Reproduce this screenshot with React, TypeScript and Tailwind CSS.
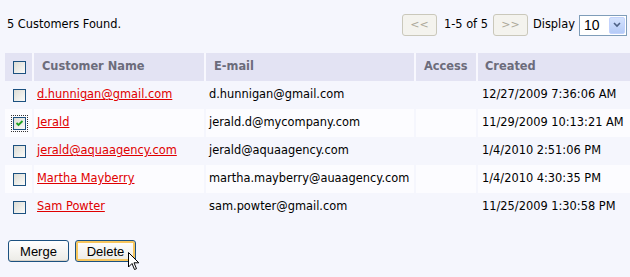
import React from "react";

type Customer = {
  name: string;
  email: string;
  access: string;
  created: string;
  checked?: boolean;
};

const customers: Customer[] = [
  { name: "d.hunnigan@gmail.com", email: "d.hunnigan@gmail.com", access: "", created: "12/27/2009 7:36:06 AM" },
  { name: "Jerald", email: "jerald.d@mycompany.com", access: "", created: "11/29/2009 10:13:21 AM", checked: true },
  { name: "jerald@aquaagency.com", email: "jerald@aquaagency.com", access: "", created: "1/4/2010 2:51:06 PM" },
  { name: "Martha Mayberry", email: "martha.mayberry@auaagency.com", access: "", created: "1/4/2010 4:30:35 PM" },
  { name: "Sam Powter", email: "sam.powter@gmail.com", access: "", created: "11/25/2009 1:30:58 PM" },
];

function Check({ checked }: { checked?: boolean }) {
  return (
    <span
      className={
        "relative block w-[13px] h-[13px] border border-[#1c5180] bg-gradient-to-br from-[#dcdcd5] to-[#fbfbf9] " +
        (checked ? "outline outline-1 outline-dotted outline-[#333] outline-offset-1" : "")
      }
    >
      {checked && (
        <svg viewBox="0 0 11 11" className="absolute inset-0 w-[11px] h-[11px]">
          <path d="M2.5 5 L4.5 7 L8.5 3" fill="none" stroke="#21a121" strokeWidth="1.8" />
        </svg>
      )}
    </span>
  );
}

function PageButton({ label }: { label: string }) {
  return (
    <span className="flex items-center justify-center w-[35px] h-[22px] rounded-[3px] border border-[#cac8bb] bg-[#f4f3ee] text-[#aca899] text-[11px]">
      {label}
    </span>
  );
}

function ActionButton({ label, hover }: { label: string; hover?: boolean }) {
  return (
    <button
      className={
        "w-[61px] h-[22px] rounded-[3px] border border-[#1c5180] bg-gradient-to-b from-[#ffffff] to-[#ecebe6] text-[13px] text-black leading-none " +
        (hover ? "shadow-[inset_0_0_0_2px_#f7c65e]" : "shadow-[inset_0_-1px_0_#d6d0c5]")
      }
      style={{ fontFamily: '"Liberation Sans", Arial, sans-serif' }}
    >
      {label}
    </button>
  );
}

export default function App() {
  return (
    <div
      className="relative w-[630px] h-[277px] bg-[#f5f6fd] text-[11.4px] text-black overflow-hidden"
      style={{ fontFamily: '"DejaVu Sans", Verdana, sans-serif' }}
    >
      {/* top bar */}
      <div className="flex items-center justify-between h-[47px] pt-[3px] pl-[7px] pr-[3px]">
        <span>5 Customers Found.</span>
        <div className="flex items-center">
          <PageButton label="<<" />
          <span className="ml-[7px] mr-[5px]">1-5 of 5</span>
          <PageButton label=">>" />
          <span className="ml-[5px] mr-[4px]">Display</span>
          <div className="flex items-stretch w-[48px] h-[21px] border border-[#7f9db9] bg-white">
            <span
              className="flex-1 pl-[4px] text-[14px] leading-[19px]"
              style={{ fontFamily: '"Liberation Sans", Arial, sans-serif' }}
            >
              10
            </span>
            <span className="flex items-center justify-center w-[16px] m-[1px] rounded-[2px] bg-gradient-to-b from-[#d4e2fd] to-[#b5cbf7] border border-[#c3d3fd]">
              <svg viewBox="0 0 8 6" className="w-[8px] h-[6px]">
                <path d="M1 1 L4 4 L7 1" fill="none" stroke="#4d6185" strokeWidth="1.6" />
              </svg>
            </span>
          </div>
        </div>
      </div>

      {/* grid */}
      <table className="ml-[5px] mt-[6px] w-[625px] border-collapse table-fixed">
        <colgroup>
          <col className="w-[28px]" />
          <col className="w-[172px]" />
          <col className="w-[210px]" />
          <col className="w-[62px]" />
          <col />
        </colgroup>
        <thead>
          <tr className="h-[28px] bg-[#e3e3f3] text-[#6c6c7b] font-bold text-left">
            <th className="pl-[8px]">
              <Check />
            </th>
            <th className="pl-[8px] border-l-2 border-[#f8f8fe]">Customer Name</th>
            <th className="pl-[8px] border-l-2 border-[#f8f8fe]">E-mail</th>
            <th className="pl-[8px] border-l-2 border-[#f8f8fe]">Access</th>
            <th className="pl-[7px] border-l-2 border-[#f8f8fe]">Created</th>
          </tr>
        </thead>
        <tbody>
          {customers.map((c, i) => (
            <tr key={c.email} className={"h-[28px] " + (i % 2 === 1 ? "bg-[#fcfcff]" : "bg-[#f5f6fd]")}>
              <td className="pl-[8px]">
                <Check checked={c.checked} />
              </td>
              <td className="pl-[3px] border-l-2 border-[#f5f6fd] whitespace-nowrap">
                <a href="#" className="text-[#e00000] underline">
                  {c.name}
                </a>
              </td>
              <td className="pl-[3px] border-l-2 border-[#f5f6fd] whitespace-nowrap">{c.email}</td>
              <td className="pl-[3px] border-l-2 border-[#f5f6fd]">{c.access}</td>
              <td className="pl-[4px] border-l-2 border-[#f5f6fd] whitespace-nowrap">{c.created}</td>
            </tr>
          ))}
        </tbody>
      </table>

      {/* actions */}
      <div className="flex gap-[6px] ml-[8px] mt-[19px]">
        <ActionButton label="Merge" />
        <ActionButton label="Delete" hover />
      </div>

      {/* mouse pointer */}
      <svg viewBox="0 0 12 19" className="absolute left-[128px] top-[252px] w-[12px] h-[19px]">
        <path
          d="M0.5 0.5 L0.5 15 L4 11.5 L6.5 17.5 L8.5 16.7 L6 10.8 L10.8 10.8 Z"
          fill="#fff"
          stroke="#000"
          strokeWidth="1"
          strokeLinejoin="miter"
        />
      </svg>
    </div>
  );
}
